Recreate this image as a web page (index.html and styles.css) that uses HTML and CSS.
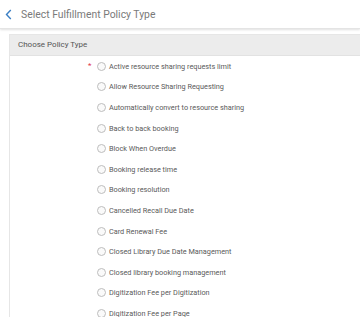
FILE: index.html
```html
<!DOCTYPE html>
<html lang="en">
<head>
  <meta charset="UTF-8" />
  <meta name="viewport" content="width=device-width, initial-scale=1.0">
  <title>Select Fulfillment Policy Type</title>
  <link rel="stylesheet" href="styles.css">
</head>
<body>
  <div class="topbar">
    <svg class="back" width="7" height="11" viewBox="0 0 7 11">
      <path d="M5.8 1 L1.5 5.5 L5.8 10" fill="none" stroke="#3b7fc4" stroke-width="1.4"/>
    </svg>
    <h1 class="title">Select Fulfillment Policy Type</h1>
  </div>

  <div class="panel">
    <div class="panel-head">Choose Policy Type</div>
    <ul class="options">
      <li><span class="req">*</span><span class="radio"></span>Active resource sharing requests limit</li>
      <li><span class="radio"></span>Allow Resource Sharing Requesting</li>
      <li><span class="radio"></span>Automatically convert to resource sharing</li>
      <li><span class="radio"></span>Back to back booking</li>
      <li><span class="radio"></span>Block When Overdue</li>
      <li><span class="radio"></span>Booking release time</li>
      <li><span class="radio"></span>Booking resolution</li>
      <li><span class="radio"></span>Cancelled Recall Due Date</li>
      <li><span class="radio"></span>Card Renewal Fee</li>
      <li><span class="radio"></span>Closed Library Due Date Management</li>
      <li><span class="radio"></span>Closed library booking management</li>
      <li><span class="radio"></span>Digitization Fee per Digitization</li>
      <li><span class="radio"></span>Digitization Fee per Page</li>
    </ul>
  </div>
</body>
</html>
```

FILE: styles.css
```css
body {
  margin: 0;
  background: #fff;
  font-family: Roboto, Arial, sans-serif;
  overflow: hidden;
}

.topbar {
  display: flex;
  align-items: center;
  height: 28px;
  padding-left: 5px;
  box-shadow: 0 1px 2px rgba(0, 0, 0, 0.12);
  border-bottom: 1px solid #e4e4e4;
}

.back {
  display: block;
}

.title {
  margin: 0 0 0 9px;
  font-size: 10.4px;
  font-weight: 400;
  color: #7a7a7a;
}

.panel {
  margin: 5px -4px 0 9px;
  border-left: 1px solid #e6e6e6;
  border-top: 1px solid #e6e6e6;
}

.panel-head {
  height: 20px;
  line-height: 20px;
  padding-left: 8px;
  background: #ececec;
  border-bottom: 1px solid #e2e2e2;
  font-size: 8px;
  color: #555;
}

.options {
  list-style: none;
  margin: 0;
  padding: 0 0 0 87px;
}

.options li {
  position: relative;
  display: flex;
  align-items: center;
  height: 20.6px;
  font-size: 7.3px;
  color: #5a5a5a;
}

.req {
  position: absolute;
  left: -9px;
  top: 5px;
  color: #e0334a;
  font-size: 8px;
}

.radio {
  flex: none;
  width: 7px;
  height: 7px;
  border: 1px solid #bdbdbd;
  border-radius: 50%;
  margin-right: 3px;
  background: #fafafa;
}
```
